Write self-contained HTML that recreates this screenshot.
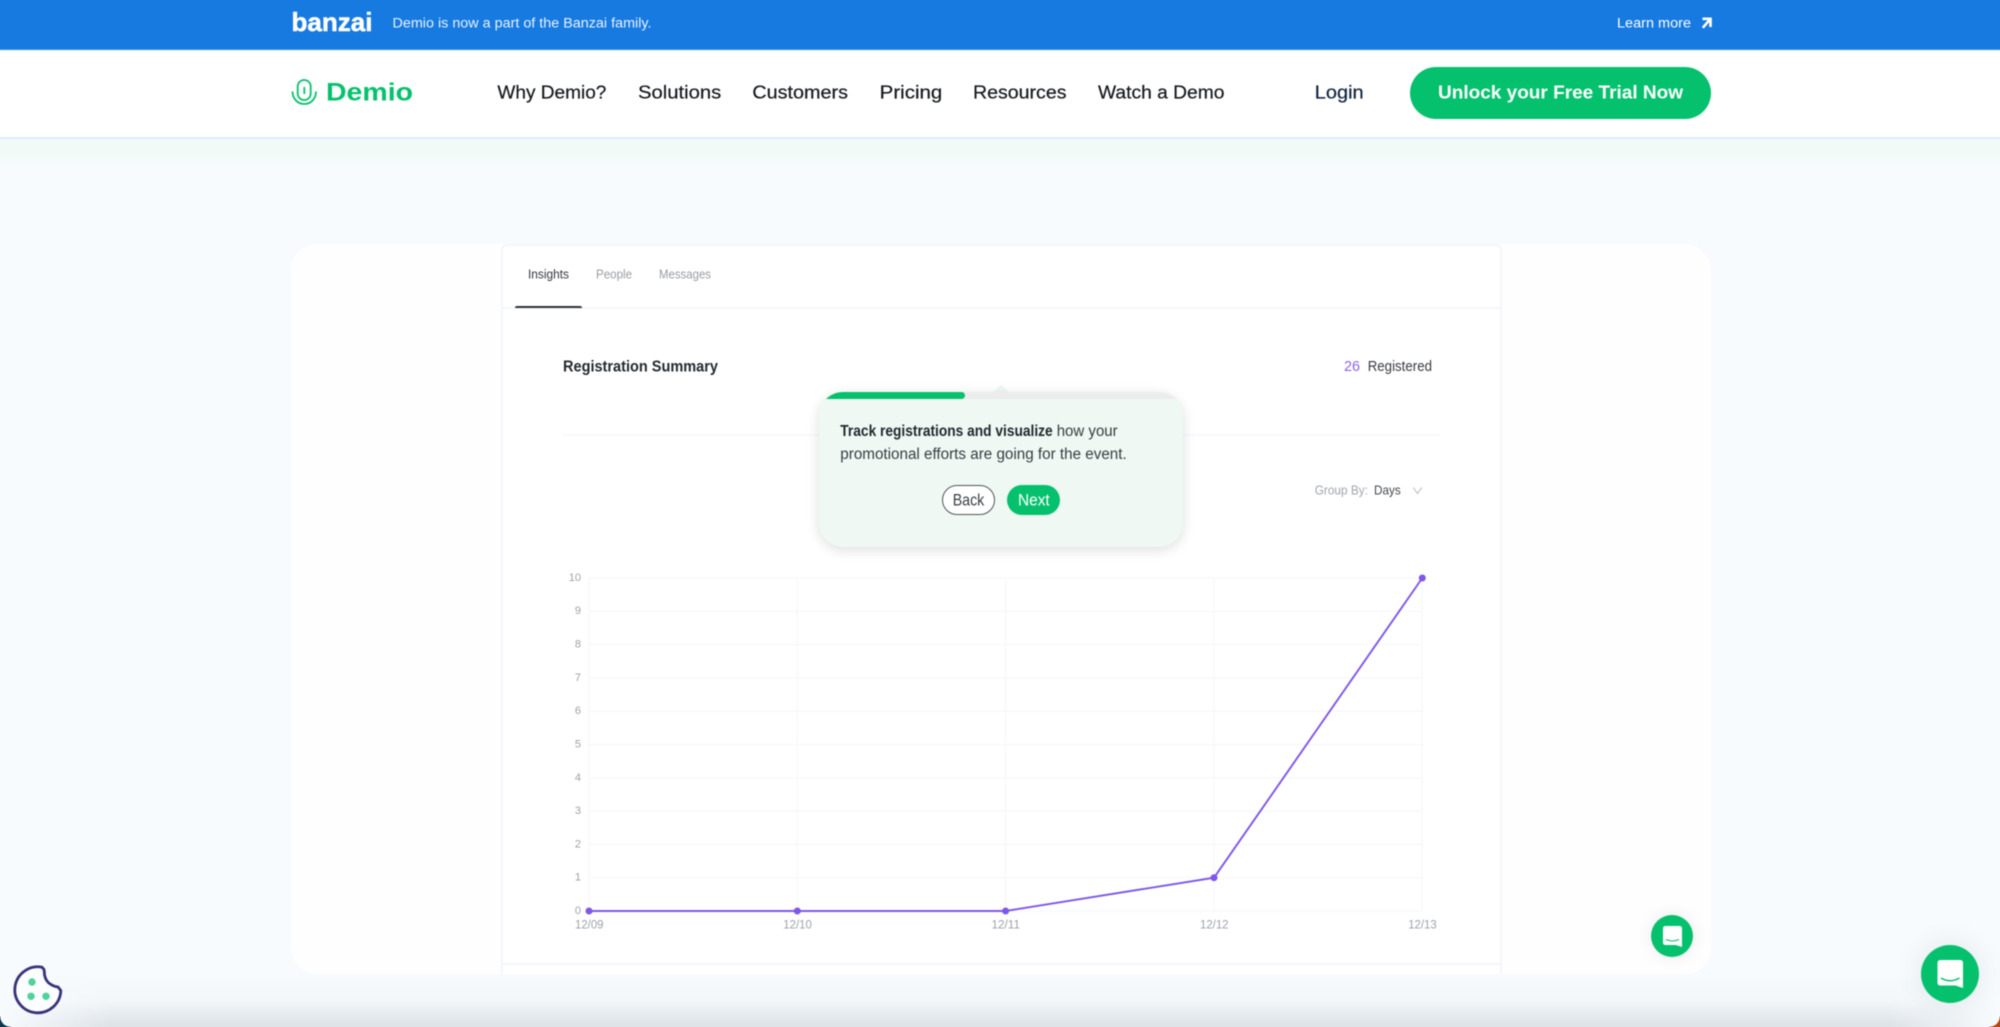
<!DOCTYPE html>
<html lang="en">
<head>
<meta charset="utf-8">
<title>Demio</title>
<style>
html,body{margin:0;padding:0;width:2000px;height:1027px;overflow:hidden;background:#f7fbfe}
#root{position:relative;width:2000px;height:1027px;filter:blur(.4px)}
#root>div{position:absolute}
.bg{left:-20px;top:-20px;width:2040px;height:1067px;background:#f7fbfe}
.banner{left:-20px;top:-20px;width:2040px;height:69px;background:#177ae0;border-bottom:1px solid #2b8bf0}
.nav{left:-20px;top:50px;width:2040px;height:87px;background:#fff;border-bottom:2px solid #dfeef9}
.band{left:-20px;top:139px;width:2040px;height:28px;background:linear-gradient(#f2faf8 0,#f3fbf9 70%,#f7fbfe 100%)}
.cta{left:1410px;top:67px;width:301px;height:52px;border-radius:26px;background:#05c16d}
.card{left:291px;top:244px;width:1420px;height:730px;background:#fefefe;border-radius:26px}
.panel{left:501px;top:244px;width:1001px;height:730px;background:#fff;border:solid #f5f6fb;border-width:2px 2px 0 2px;border-radius:6px 6px 0 0;box-sizing:border-box}
.tabline{left:503px;top:307px;width:997px;height:2px;background:#f6f7fb}
.tabactive{left:515px;top:306px;width:67px;height:2px;background:#2b3238;border-radius:2px 2px 0 0}
.div1{left:563px;top:434px;width:876px;height:2px;background:#f7f9fd}
.div2{left:503px;top:963px;width:997px;height:2px;background:#f5f5fa}
.tip{left:819px;top:392px;width:364px;height:155px;background:#eff8f3;border-radius:24px;box-shadow:0 3px 12px rgba(30,40,50,.15);overflow:hidden}
.tip i{position:absolute;left:5px;top:0;height:7px;display:block}
.tip .g1{width:354px;background:#ececec;border-radius:10px 10px 0 0}
.tip .g2{width:141px;background:#05c16d;border-radius:7px 7px 7px 0}
.back{left:942px;top:485px;width:53px;height:30px;box-sizing:border-box;background:#fff;border:1.5px solid #4f5458;border-radius:15px}
.next{left:1007px;top:485px;width:53px;height:30px;background:#05c16d;border-radius:15px}
.shade{left:0;top:974px;width:2000px;height:73px;background:linear-gradient(rgba(40,50,60,0) 0,rgba(40,50,60,.025) 37%,rgba(40,50,60,.125) 73%,rgba(40,50,60,.14) 100%);-webkit-mask-image:linear-gradient(90deg,transparent 0,#000 110px,#000 1890px,transparent 100%);mask-image:linear-gradient(90deg,transparent 0,#000 110px,#000 1890px,transparent 100%)}
.c1{left:1651px;top:915px;width:42px;height:42px;border-radius:50%;background:#05c16d;box-shadow:0 0 16px rgba(60,70,80,.1)}
.c2{left:1921px;top:945px;width:58px;height:58px;border-radius:50%;background:#05c16d;box-shadow:0 0 28px rgba(60,70,80,.12)}
svg.o{position:absolute;left:0;top:0;overflow:visible}
</style>
</head>
<body>
<div id="root">
  <div class="bg"></div>
  <div class="band"></div>
  <div class="banner"></div>
  <div class="nav"></div>
  <div class="cta"></div>
  <div class="card"></div>
  <div class="panel"></div>
  <div class="tabline"></div>
  <div class="tabactive"></div>
  <div class="div1"></div>
  <div class="div2"></div>
  <div class="shade"></div>
  <svg class="o" width="2000" height="1027" viewBox="0 0 2000 1027" font-family="'Liberation Sans',sans-serif">
    <!-- banner -->
    <text x="291.5" y="31" font-size="26" font-weight="700" fill="#fff" stroke="#fff" stroke-width=".5" textLength="81" lengthAdjust="spacingAndGlyphs">banzai</text>
    <text x="392.5" y="27.5" font-size="13.5" fill="#eaf3fd" textLength="259" lengthAdjust="spacingAndGlyphs">Demio is now a part of the Banzai family.</text>
    <text x="1617" y="27.5" font-size="13.5" fill="#fff" textLength="74" lengthAdjust="spacingAndGlyphs">Learn more</text>
    <path d="M1702.5 18.8H1710.5V27M1710 19.3L1702.8 27.8" fill="none" stroke="#fff" stroke-width="2.6"/>
    <!-- logo -->
    <rect x="297.7" y="80" width="13" height="20" rx="6.5" fill="none" stroke="#05c16d" stroke-width="1.8"/>
    <path d="M304.3 87V94" stroke="#05c16d" stroke-width="1.8" fill="none"/>
    <path d="M292.5 91.5C292.5 99 298 104 304.3 104S316 99 316 91.5" fill="none" stroke="#05c16d" stroke-width="1.8"/>
    <text x="326" y="100.5" font-size="25" font-weight="700" fill="#05c16d" textLength="87" lengthAdjust="spacingAndGlyphs">Demio</text>
    <!-- nav -->
    <g font-size="18.5" fill="#14181c" stroke="#14181c" stroke-width=".2">
      <text x="497.4" y="98.5" textLength="109" lengthAdjust="spacingAndGlyphs">Why Demio?</text>
      <text x="638" y="98.5" textLength="83.3" lengthAdjust="spacingAndGlyphs">Solutions</text>
      <text x="752.4" y="98.5" textLength="95.6" lengthAdjust="spacingAndGlyphs">Customers</text>
      <text x="879.7" y="98.5" textLength="62.6" lengthAdjust="spacingAndGlyphs">Pricing</text>
      <text x="973" y="98.5" textLength="93.5" lengthAdjust="spacingAndGlyphs">Resources</text>
      <text x="1098" y="98.5" textLength="126.4" lengthAdjust="spacingAndGlyphs">Watch a Demo</text>
      <text x="1314.8" y="98.5" textLength="48.8" lengthAdjust="spacingAndGlyphs" fill="#10233c" stroke="#10233c">Login</text>
    </g>
    <text x="1438" y="98.5" font-size="18.5" font-weight="700" fill="#fff" textLength="245" lengthAdjust="spacingAndGlyphs">Unlock your Free Trial Now</text>
    <!-- tabs -->
    <g font-size="13">
      <text x="528" y="278.7" fill="#33393f" textLength="41" lengthAdjust="spacingAndGlyphs">Insights</text>
      <text x="596" y="278.7" fill="#999ca2" textLength="36" lengthAdjust="spacingAndGlyphs">People</text>
      <text x="659" y="278.7" fill="#999ca2" textLength="52" lengthAdjust="spacingAndGlyphs">Messages</text>
    </g>
    <text x="563" y="371.7" font-size="16" font-weight="700" fill="#22292f" textLength="155" lengthAdjust="spacingAndGlyphs">Registration Summary</text>
    <text x="1344" y="371.2" font-size="14.5" fill="#8a63f0" textLength="16" lengthAdjust="spacingAndGlyphs">26</text>
    <text x="1367.7" y="371.2" font-size="14.5" fill="#363b41" textLength="64.3" lengthAdjust="spacingAndGlyphs">Registered</text>
    <text x="1314.7" y="494.5" font-size="13" fill="#a0a4ac" textLength="53.3" lengthAdjust="spacingAndGlyphs">Group By:</text>
    <text x="1374" y="494.5" font-size="13" fill="#44494f" textLength="26.7" lengthAdjust="spacingAndGlyphs">Days</text>
    <path d="M1413.3 487.5L1417.5 493.5L1421.7 487.5" fill="none" stroke="#b4b8be" stroke-width="1"/>
    <!-- chart grid -->
    <g stroke="#f6f7fb" stroke-width="1.2" fill="none">
      <path d="M589 578H1422.3M589 611.3H1422.3M589 644.6H1422.3M589 677.9H1422.3M589 711.2H1422.3M589 744.5H1422.3M589 777.8H1422.3M589 811.1H1422.3M589 844.4H1422.3M589 877.7H1422.3M589 911H1422.3"/>
      <path d="M589 578V911M797.3 578V911M1005.6 578V911M1214 578V911M1422.3 578V911"/>
    </g>
    <g font-size="11" fill="#9da1a9" text-anchor="end">
      <text x="581" y="581">10</text><text x="581" y="614">9</text><text x="581" y="647.5">8</text><text x="581" y="681">7</text><text x="581" y="714">6</text><text x="581" y="747.5">5</text><text x="581" y="781">4</text><text x="581" y="814">3</text><text x="581" y="847.5">2</text><text x="581" y="880.5">1</text><text x="581" y="914">0</text>
    </g>
    <g font-size="11.5" fill="#9da1a9">
      <text x="575" y="928.7" textLength="28.5" lengthAdjust="spacingAndGlyphs">12/09</text>
      <text x="783.3" y="928.7" textLength="28.5" lengthAdjust="spacingAndGlyphs">12/10</text>
      <text x="991.5" y="928.7" textLength="28.5" lengthAdjust="spacingAndGlyphs">12/11</text>
      <text x="1200" y="928.7" textLength="28.5" lengthAdjust="spacingAndGlyphs">12/12</text>
      <text x="1408.2" y="928.7" textLength="28.5" lengthAdjust="spacingAndGlyphs">12/13</text>
    </g>
    <polyline points="589,911 797.3,911 1005.6,911 1214,877.7 1422.3,578" fill="none" stroke="#7f57ea" stroke-width="1.9"/>
    <g fill="#7f57ea">
      <circle cx="589" cy="911" r="3.5"/><circle cx="797.3" cy="911" r="3.5"/><circle cx="1005.6" cy="911" r="3.5"/><circle cx="1214" cy="877.7" r="3.5"/><circle cx="1422.3" cy="578" r="3.5"/>
    </g>
    <!-- tooltip arrow -->
    <path d="M992 393L1001 384.5L1010 393Z" fill="#eff8f3"/>
  </svg>
  <div class="tip"><i class="g1"></i><i class="g2"></i></div>
  <div class="back"></div>
  <div class="next"></div>
  <div class="c1"></div>
  <div class="c2"></div>
  <svg class="o" width="2000" height="1027" viewBox="0 0 2000 1027" font-family="'Liberation Sans',sans-serif">
    <text x="840.3" y="436" font-size="15.5" font-weight="700" fill="#1f272e" textLength="212.4" lengthAdjust="spacingAndGlyphs">Track registrations and visualize</text>
    <text x="1056.7" y="436" font-size="15.5" fill="#363c42" textLength="61" lengthAdjust="spacingAndGlyphs">how your</text>
    <text x="840.3" y="459" font-size="15.5" fill="#363c42" textLength="286.4" lengthAdjust="spacingAndGlyphs">promotional efforts are going for the event.</text>
    <text x="952.7" y="505.5" font-size="16.5" fill="#393e43" textLength="31.6" lengthAdjust="spacingAndGlyphs">Back</text>
    <text x="1018" y="505.5" font-size="16.5" fill="#fff" textLength="31.7" lengthAdjust="spacingAndGlyphs">Next</text>

    <!-- small chat icon -->
    <path d="M1665.5 926H1679.5Q1682 926 1682 928.5V947L1676 945H1665.5Q1663 945 1663 942.5V928.5Q1663 926 1665.5 926Z" fill="#fff"/>
    <path d="M1666 939.5Q1672.5 942.5 1679 939.5" fill="none" stroke="#05c16d" stroke-width="1"/>
    <!-- large chat icon -->
    <path d="M1940.5 960H1960Q1963 960 1963 963V988L1955.5 985.5H1940.5Q1937.5 985.5 1937.5 982.5V963Q1937.5 960 1940.5 960Z" fill="#fff"/>
    <path d="M1941 978Q1950 983.5 1959.5 978" fill="none" stroke="#05c16d" stroke-width="1.5"/>

    <!-- cookie -->
    <path d="M42 967.2L44 969.5Q44.5 972 44.5 975Q46 982 51 984.5Q54 986.5 58 987L60.8 990.5A23 23 0 1 1 42 967.2Z" fill="#fbfdfe" stroke="#37327a" stroke-width="2.8" stroke-linejoin="round"/>
    <g fill="#4fd39a">
      <circle cx="32" cy="982" r="3.7"/><circle cx="31" cy="996.3" r="3.7"/><circle cx="46" cy="996.3" r="3.7"/>
    </g>
    <!-- window corners -->
    <path d="M-5 1016H0Q1 1026 11 1027V1035H-5Z" fill="#0b3a4f"/>
    <path d="M2005 1016H2000Q1999 1026 1989 1027V1035H2005Z" fill="#b5460f"/>
  </svg>
</div>
</body>
</html>
